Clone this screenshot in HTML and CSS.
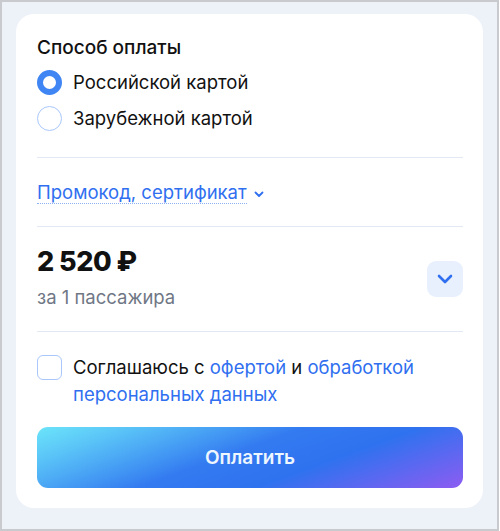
FILE: index.html
```html
<!DOCTYPE html>
<html lang="ru">
<head>
  <meta charset="UTF-8">
  <meta name="viewport" content="width=device-width, initial-scale=1.0">
  <title>Оплата</title>
  <link rel="stylesheet" href="styles.css">
</head>
<body>
  <div class="frame">
    <div class="card">
      <div class="title">Способ оплаты</div>
      <div class="radios">
        <label class="radio-row">
          <span class="radio checked"></span>
          <span>Российской картой</span>
        </label>
        <label class="radio-row">
          <span class="radio"></span>
          <span>Зарубежной картой</span>
        </label>
      </div>

      <div class="section promo">
        <a class="promo-link" href="#">Промокод, сертификат</a>
        <svg class="promo-chevron" width="10" height="7" viewBox="0 0 10 7">
          <path d="M1.5 1.5 L5 5 L8.5 1.5" fill="none" stroke="#2f6ff0" stroke-width="1.8" stroke-linecap="round" stroke-linejoin="round"/>
        </svg>
      </div>

      <div class="section price-row">
        <div>
          <div class="price">2 520 ₽</div>
          <div class="price-sub">за 1 пассажира</div>
        </div>
        <button class="expand-btn">
          <svg width="16" height="10" viewBox="0 0 16 10">
            <path d="M2 2 L8 8 L14 2" fill="none" stroke="#2f6ff0" stroke-width="2.6" stroke-linecap="round" stroke-linejoin="round"/>
          </svg>
        </button>
      </div>

      <div class="section agree">
        <span class="checkbox"></span>
        <div class="agree-text">
          Соглашаюсь с <a href="#">офертой</a> и <a href="#">обработкой</a><br><a href="#">персональных данных</a>
        </div>
      </div>

      <button class="pay-btn">Оплатить</button>
    </div>
  </div>
</body>
</html>
```

FILE: styles.css
```css
body {
  margin: 0;
  font-family: Inter, "Noto Sans", sans-serif;
  color: #111;
}
.frame {
  border: 2px solid #c9cacd;
  background: #edf1f8;
  padding: 12px 14px 0 14px;
  width: 467px;
  height: 515px;
}
.card {
  background: #fff;
  border-radius: 18px;
  padding: 22px 20px 20px 21px;
  height: 494px;
  box-sizing: border-box;
}
.title {
  font-size: 19px;
  font-weight: 500;
  line-height: 24px;
}
.radios {
  margin-top: 4px;
  margin-bottom: 21px;
}
.radio-row {
  display: flex;
  align-items: center;
  gap: 11px;
  height: 36px;
  font-size: 18.5px;
}
.radio {
  width: 25px;
  height: 25px;
  box-sizing: border-box;
  border-radius: 50%;
  border: 1.5px solid #a9c7fb;
}
.radio.checked {
  border: 6.5px solid #3f86f4;
}
.section {
  border-top: 1px solid #e3e9f2;
}
.promo {
  display: flex;
  align-items: center;
  gap: 7px;
  padding: 23px 0 22px;
}
.promo-link {
  color: #2f6ff0;
  text-decoration: none;
  font-size: 18.5px;
  line-height: 22px;
  border-bottom: 1px dotted #8fb2f5;
}
.promo-chevron {
  margin-top: 4px;
}
.price-row {
  display: flex;
  align-items: center;
  justify-content: space-between;
  padding: 19px 0 22px;
}
.price {
  font-size: 27px;
  font-weight: 800;
  line-height: 32px;
  letter-spacing: -0.5px;
}
.price-sub {
  margin-top: 7px;
  font-size: 18.5px;
  line-height: 24px;
  color: #6f7785;
}
.expand-btn {
  width: 36px;
  height: 36px;
  border: none;
  border-radius: 9px;
  background: #e8f0fe;
  display: flex;
  align-items: center;
  justify-content: center;
  padding: 0;
  margin-top: 3px;
}
.agree {
  display: flex;
  gap: 11px;
  padding-top: 22px;
}
.checkbox {
  flex: none;
  width: 25px;
  height: 25px;
  box-sizing: border-box;
  border: 1.5px solid #a9c7fb;
  border-radius: 6px;
  margin-top: 1px;
}
.agree-text {
  font-size: 18.5px;
  line-height: 27px;
}
.agree-text a {
  color: #2f6ff0;
  text-decoration: none;
}
.pay-btn {
  display: block;
  width: 100%;
  height: 61px;
  margin-top: 19px;
  border: none;
  border-radius: 11px;
  font-family: inherit;
  font-size: 19px;
  font-weight: 600;
  color: #eef6ff;
  background:
    linear-gradient(160deg, rgba(110, 233, 250, 0.95) 0%, rgba(110, 233, 250, 0) 45%),
    linear-gradient(160deg, #3d8ef4 0%, #2f72ef 65%, #8d5cf2 100%);
}
```
